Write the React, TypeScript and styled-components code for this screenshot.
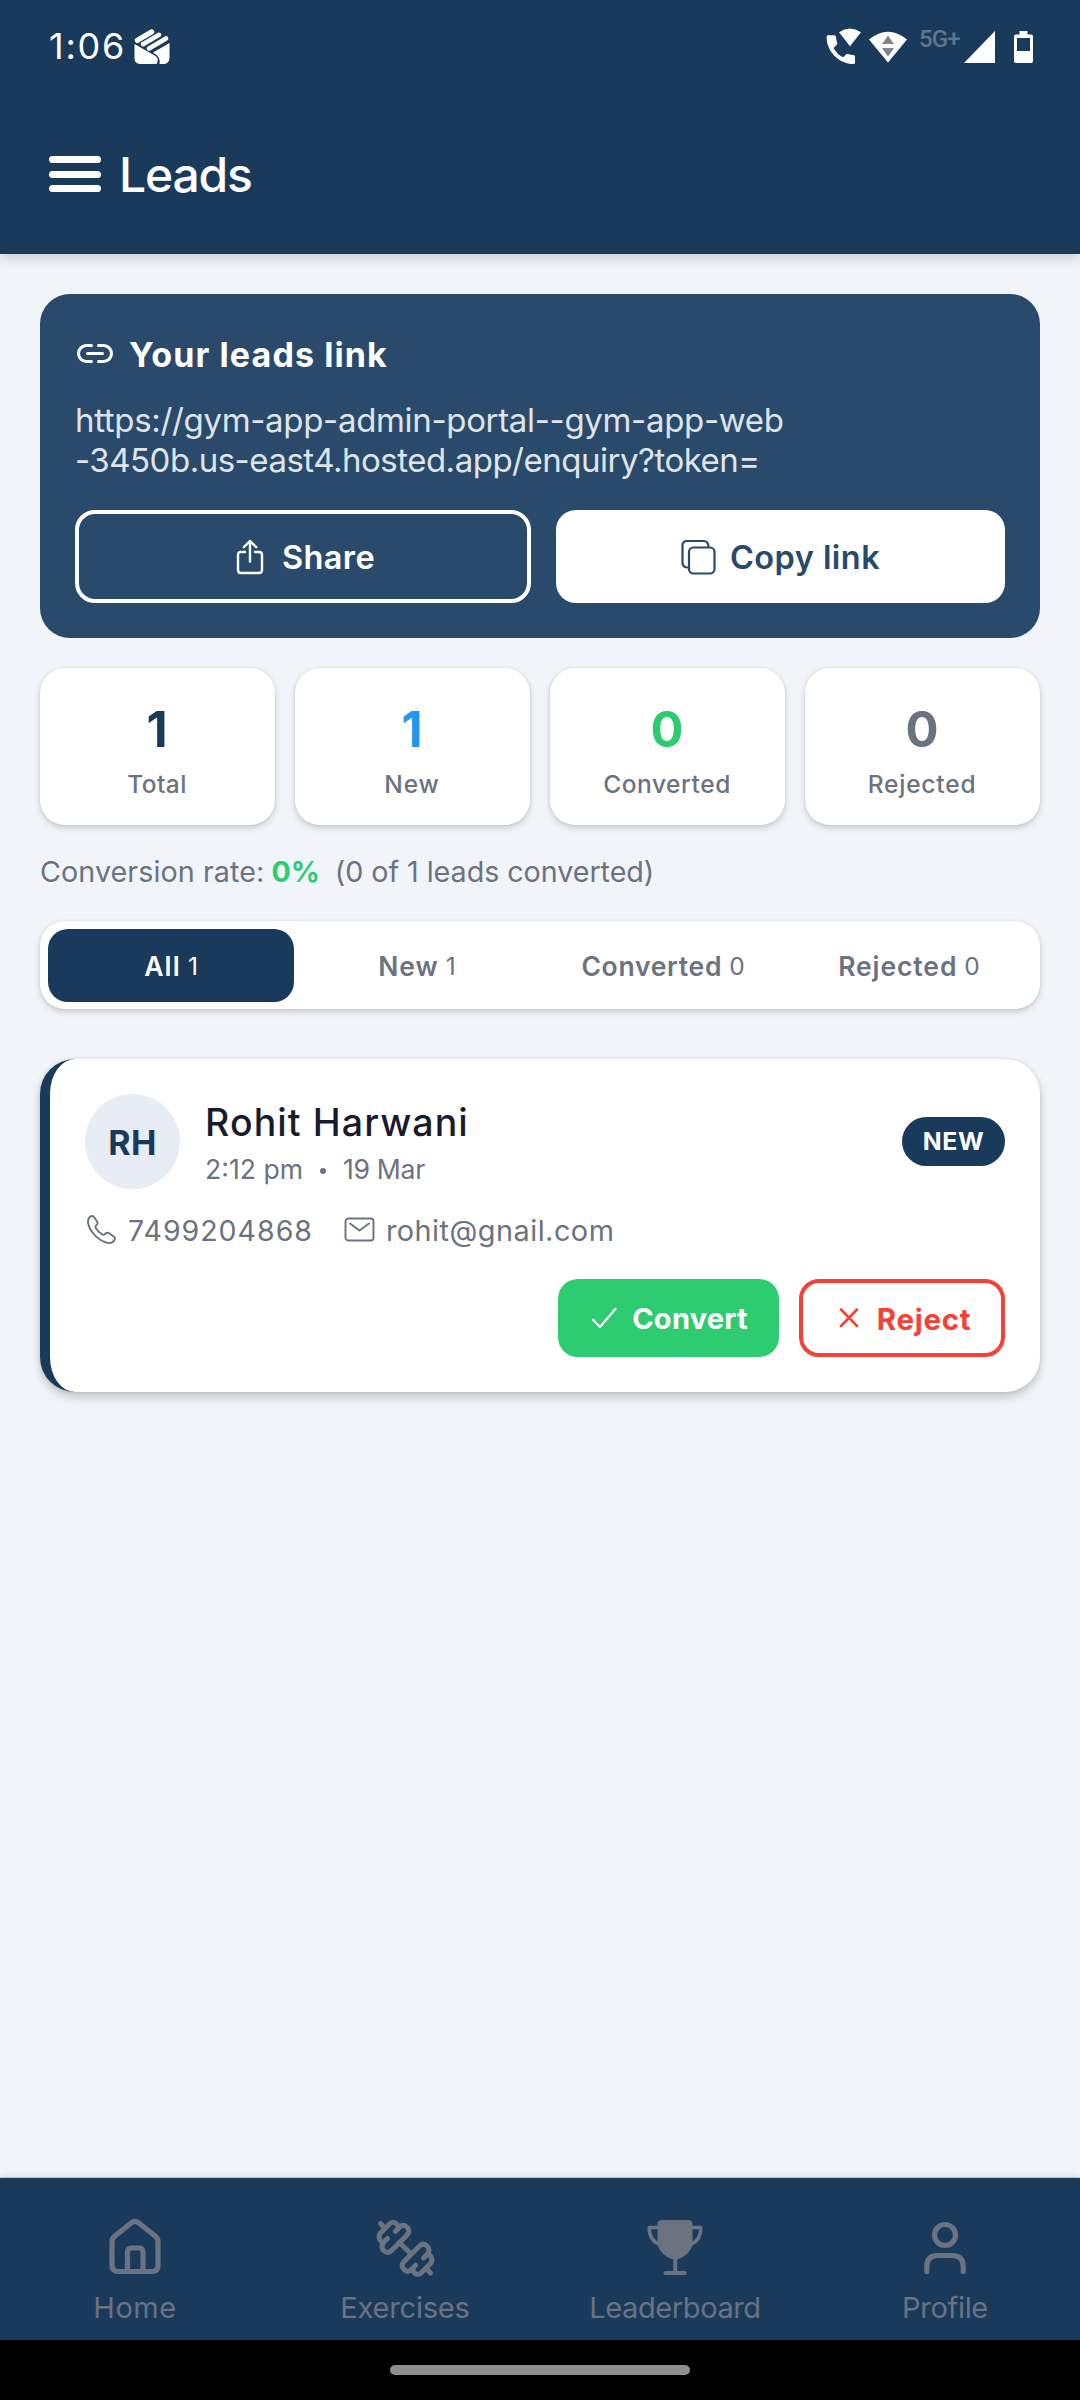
import React from "react";
import styled, { createGlobalStyle } from "styled-components";

const navy = "#1a3a5c";
const slate = "#6b7280";
const green = "#2ecc71";
const red = "#f44336";
const blue = "#2196f3";
const canvas = "#f1f5fa";

const GlobalStyle = createGlobalStyle`
  * { box-sizing: border-box; }
  body { margin: 0; background: ${canvas}; }
  button { font: inherit; margin: 0; padding: 0; border: 0; background: none; }
`;

const Screen = styled.div`
  width: 1080px;
  height: 2400px;
  display: flex;
  flex-direction: column;
  background: ${canvas};
  font-family: Inter, "Liberation Sans", sans-serif;
  color: ${slate};
  overflow: hidden;
`;

const Text = styled.span<{ $size: number; $weight?: number; $ls?: number; $color?: string; $line?: number }>`
  display: block;
  white-space: pre;
  font-size: ${(p) => p.$size}px;
  font-weight: ${(p) => p.$weight ?? 400};
  letter-spacing: ${(p) => p.$ls ?? 0}px;
  line-height: ${(p) => (p.$line ? `${p.$line}px` : "1.2")};
  color: ${(p) => p.$color ?? "inherit"};
`;

const Header = styled.header`
  height: 254px;
  flex: none;
  background: ${navy};
  color: #fff;
  box-shadow: 0 3px 12px rgba(0, 0, 0, 0.2);
`;

const StatusBar = styled.div`
  height: 93px;
  padding: 0 47px 0 49px;
  display: flex;
  align-items: center;
  justify-content: space-between;
`;

const StatusGroup = styled.div`
  display: flex;
  align-items: center;
`;

const NotificationIcon = styled.svg`
  margin-left: 7px;
`;

const NetworkLabel = styled.div`
  width: 54px;
  height: 33px;
  padding-left: 9px;
  font-family: Roboto, sans-serif;
  font-size: 24px;
  font-weight: 500;
  line-height: 19px;
  letter-spacing: -0.9px;
  color: #5e7690;
`;

const AppBar = styled.div`
  height: 161px;
  padding: 1px 0 0 49px;
  display: flex;
  align-items: center;
  gap: 18px;
  span { margin-top: 2px; }
`;

const MenuIcon = styled.div`
  width: 52px;
  height: 36px;
  display: flex;
  flex-direction: column;
  justify-content: space-between;
`;

const MenuBar = styled.i`
  height: 7px;
  border-radius: 4px;
  background: #fff;
`;

const Main = styled.main`
  flex: 1;
  padding: 40px 40px 0;
  display: flex;
  flex-direction: column;
`;

const LinkCard = styled.section`
  height: 344px;
  flex: none;
  padding: 41px 35px 35px;
  border-radius: 30px;
  background: #2a4a6b;
  color: #fff;
`;

const LinkTitle = styled.div`
  height: 40px;
  display: flex;
  align-items: center;
  gap: 12px;
  svg { margin-top: -2px; }
`;

const LinkUrl = styled.div`
  margin-top: 25px;
  color: #dfe4e9;
`;

const LinkActions = styled.div`
  margin-top: 30px;
  display: flex;
  gap: 25px;
`;

const LinkButton = styled.button<{ $filled?: boolean }>`
  width: ${(p) => (p.$filled ? 449 : 456)}px;
  height: 93px;
  padding-left: ${(p) => (p.$filled ? 0 : 5)}px;
  display: flex;
  align-items: center;
  justify-content: center;
  gap: ${(p) => (p.$filled ? 14 : 18)}px;
  border-radius: 20px;
  border: ${(p) => (p.$filled ? "0" : "4px solid #fff")};
  background: ${(p) => (p.$filled ? "#fff" : "transparent")};
  color: ${(p) => (p.$filled ? "#2a4a6b" : "#fff")};
  span { margin-top: 2px; }
`;

const Stats = styled.section`
  margin-top: 30px;
  display: grid;
  grid-template-columns: repeat(4, 1fr);
  gap: 20px;
`;

const raised = "0 3px 6px rgba(0, 0, 0, 0.17), 0 0 3px rgba(0, 0, 0, 0.08)";

const StatCard = styled.div`
  height: 157px;
  padding: 36px 1px 0 0;
  display: flex;
  flex-direction: column;
  align-items: center;
  gap: 14px;
  border-radius: 25px;
  background: #fff;
  box-shadow: ${raised};
`;

const RateRow = styled.p`
  height: 37px;
  margin: 28px 0 0;
  display: flex;
`;

const RateValue = styled.span`
  margin: 0 15px 0 7px;
`;

const Tabs = styled.nav`
  height: 88px;
  margin-top: 31px;
  padding: 8px;
  display: grid;
  grid-template-columns: repeat(4, 1fr);
  border-radius: 25px;
  background: #fff;
  box-shadow: ${raised};
`;

const Tab = styled.button<{ $active?: boolean }>`
  height: 73px;
  padding-top: 2px;
  display: flex;
  align-items: center;
  justify-content: center;
  gap: 7px;
  border-radius: 20px;
  background: ${(p) => (p.$active ? navy : "transparent")};
  color: ${(p) => (p.$active ? "#fff" : slate)};
`;

const LeadCard = styled.article`
  height: 333px;
  margin-top: 50px;
  padding: 35px;
  border-left: 10px solid ${navy};
  border-radius: 35px;
  background: #fff;
  box-shadow: 0 5px 10px rgba(0, 0, 0, 0.2), 0 0 4px rgba(0, 0, 0, 0.08);
`;

const LeadTop = styled.div`
  height: 95px;
  display: flex;
  align-items: center;
`;

const Avatar = styled.div`
  width: 95px;
  height: 95px;
  padding-top: 3px;
  display: flex;
  align-items: center;
  justify-content: center;
  border-radius: 50%;
  background: #e8ecf5;
`;

const LeadIdentity = styled.div`
  height: 95px;
  margin-left: 25px;
  padding-top: 6px;
  flex: 1;
  display: flex;
  flex-direction: column;
  gap: 7px;
`;

const LeadTime = styled.div`
  display: flex;
  align-items: center;
`;

const Dot = styled.i`
  width: 6px;
  height: 6px;
  margin: 4px 17px 0 17px;
  border-radius: 50%;
  background: ${slate};
`;

const Badge = styled.div`
  width: 103px;
  height: 49px;
  padding-top: 1px;
  display: flex;
  align-items: center;
  justify-content: center;
  border-radius: 25px;
  background: ${navy};
`;

const ContactRow = styled.div`
  height: 40px;
  margin-top: 22px;
  display: flex;
  align-items: center;
`;

const Contact = styled.div<{ $before: number }>`
  margin-left: ${(p) => p.$before}px;
  display: flex;
  align-items: center;
  gap: 11px;
  svg { margin-top: -4px; }
`;

const LeadActions = styled.div`
  margin-top: 28px;
  display: flex;
  justify-content: flex-end;
  gap: 20px;
`;

const ActionButton = styled.button<{ $outlined?: boolean }>`
  width: ${(p) => (p.$outlined ? 206 : 221)}px;
  height: 78px;
  padding: 1px 0 0 ${(p) => (p.$outlined ? 6 : 2)}px;
  display: flex;
  align-items: center;
  justify-content: center;
  gap: ${(p) => (p.$outlined ? 18 : 13)}px;
  border-radius: 20px;
  border: ${(p) => (p.$outlined ? `4px solid ${red}` : "0")};
  background: ${(p) => (p.$outlined ? "#fff" : green)};
  color: ${(p) => (p.$outlined ? red : "#fff")};
  span { margin-top: 2px; }
`;

const BottomNav = styled.nav`
  height: 162px;
  flex: none;
  display: grid;
  grid-template-columns: repeat(4, 1fr);
  background: ${navy};
  box-shadow: 0 0 8px rgba(0, 0, 0, 0.16), 0 -1px 0 rgba(0, 0, 0, 0.14);
`;

const NavItem = styled.a`
  padding-top: 33px;
  display: flex;
  flex-direction: column;
  align-items: center;
  gap: 9px;
`;

const GestureArea = styled.div`
  height: 60px;
  flex: none;
  display: flex;
  align-items: center;
  justify-content: center;
  background: #000;
`;

const GestureBar = styled.div`
  width: 300px;
  height: 10px;
  border-radius: 5px;
  background: #8f8f8f;
`;

const strokeProps = {
  fill: "none",
  stroke: "currentColor",
  strokeLinecap: "round" as const,
  strokeLinejoin: "round" as const,
};

const FistIcon = () => (
  <NotificationIcon width="38" height="38" viewBox="0 0 38 38">
    <g fill="none" stroke="#fff" strokeLinecap="round">
      <path strokeWidth="5.4" d="M4.500 12.300L18.500 4" />
      <path strokeWidth="4.600" d="M10 16.200L26 6.800" />
      <path strokeWidth="4.600" d="M16 20.400L33 10.400" />
    </g>
    <path fill="#fff" d="M1.500 16L22.500 28Q26.500 31 23.500 36H8Q1.500 36 1.500 30ZM20 24.500L36.500 15V30Q36 36 30 36H26.500Q28 29 20 24.500Z" />
  </NotificationIcon>
);

const WifiCallIcon = () => (
  <svg width="36" height="37" viewBox="0 0 36 37">
    <path fill="#fff" d="M2 7.200H8.500Q10 7.200 10 8.800Q10 12 11.200 15.200Q11.400 16.200 10.600 17L7.500 20Q11.500 27 17.200 29.300L20.300 26.300Q21 25.600 22 25.900Q25 26.800 27.500 26.900Q29 27 29 28.500V34.500Q29 36 27.500 36C13 36 .6 23.500 .6 8.700Q.6 7.200 2 7.200Z" />
    <path fill="#fff" d="M13 4.200Q23.800-3 35 4.200L24 18.300Z" />
  </svg>
);

const WifiIcon = () => (
  <svg width="48" height="34" viewBox="0 0 48 34">
    <path fill="#fff" d="M7 9.500Q26-6 45 9.500L26 32.500Z" />
    <path fill="#80868a" d="M20 14L26 5.500L32 14ZM20 18H32L26 26.500Z" />
  </svg>
);

const SignalIcon = () => (
  <svg width="32" height="32" viewBox="0 0 32 32">
    <path fill="#fff" d="M31 0V32H0Z" />
  </svg>
);

const BatteryIcon = () => (
  <svg width="37" height="32" viewBox="1 0 37 32">
    <path fill="#fff" fillRule="evenodd" d="M24.500 0H32.500V3.500H36Q38 3.500 38 5.500V30Q38 32 36 32H21Q19 32 19 30V5.500Q19 3.500 21 3.500H24.500ZM22 7V20H35V7Z" />
  </svg>
);

const LinkIcon = () => (
  <svg width="42" height="36" viewBox="0 0 42 36" {...strokeProps} strokeWidth="3">
    <path d="M16.500 9.500H11.500A8 8 0 0 0 11.500 25.500H16.500M23.500 9.500H28.500A8 8 0 0 1 28.500 25.500H23.500M12.500 17.500H27.500" />
  </svg>
);

const ShareIcon = () => (
  <svg width="28" height="36" viewBox="0 0 28 36" {...strokeProps} strokeWidth="2.4">
    <path d="M9 13H5Q2 13 2 16V31Q2 34 5 34H23Q26 34 26 31V16Q26 13 23 13H19M14 22.500V2M7.800 8.200L14 2L20.200 8.200" />
  </svg>
);

const CopyIcon = () => (
  <svg width="35" height="36" viewBox="0 0 35 36" {...strokeProps} strokeWidth="2.2">
    <rect x="8" y="8.500" width="25.500" height="26" rx="4.500" />
    <path d="M8 28.500H6Q1.500 28 1.500 23.500V6.500Q1.500 2 6 2H22.500Q27.500 2 27.500 8" />
  </svg>
);

const PhoneIcon = () => (
  <svg width="31" height="31" viewBox="0 0 31 31" {...strokeProps} strokeWidth="1.9">
    <path d="M3.200 3.600Q5 1.400 7.200 2.200Q9.300 4.300 11.400 8.100Q12 9.800 10.400 11.200Q9 12.200 9.600 13.800Q12.200 18.300 16.500 20.700Q18 21.300 19.200 19.800Q20.800 18 23 19.200L28 22.800Q29.800 24.300 28.300 26.300Q26 29.600 22.300 29.100C13.200 27.300 3.800 18 2.200 9.500Q1.500 6 3.200 3.600Z" />
  </svg>
);

const MailIcon = () => (
  <svg width="31" height="25" viewBox="0 0 31 25" {...strokeProps} strokeWidth="1.9">
    <rect x="1.500" y="1.500" width="28" height="22" rx="2.800" />
    <path d="M6 6.500L15.500 13.500L25 6.500" />
  </svg>
);

const CheckIcon = () => (
  <svg width="28" height="24" viewBox="0 0 28 24" {...strokeProps} strokeWidth="2.2">
    <path d="M2 12.800L9 20L24.500 1.800" />
  </svg>
);

const CrossIcon = () => (
  <svg width="20" height="24" viewBox="0 0 20 24" {...strokeProps} strokeWidth="2.6">
    <path d="M2 2.500L18 19M18 2.500L2 19" />
  </svg>
);

const HomeIcon = () => (
  <svg width="70" height="70" viewBox="0 0 70 70" {...strokeProps} strokeWidth="5.2">
    <path d="M12 30.500Q12 27.500 14.300 25.500L31.500 11.700Q35 9 38.500 11.700L55.700 25.500Q58 27.500 58 30.500V54.500Q58 60.500 52 60.500H18Q12 60.500 12 54.500ZM27.500 60.500V41Q27.500 37 31.500 37H39Q43 37 43 41V60.500" />
  </svg>
);

const DumbbellIcon = () => (
  <svg width="70" height="70" viewBox="0 0 70 70" {...strokeProps} strokeWidth="5">
    <path d="M30 32L41 43" />
    <g id="plates">
      <path d="M10.500 12.500L13.500 15.500M28.500 17C27.500 12 24 9.800 20 12.500L11 21.500C7.500 25 9 29.500 13.500 31.500" />
      <path d="M25.300 20.500L29.500 16Q33.500 12.500 37.200 16.200Q40.500 20 37 24L21 40Q17.500 43 13.700 39.500Q10.500 36 13.500 31.500L17.500 27.500" />
    </g>
    <use href="#plates" transform="rotate(180 35.500 37.300)" />
  </svg>
);

const TrophyIcon = () => (
  <svg width="70" height="70" viewBox="0 0 70 70">
    <path fill="currentColor" d="M17.500 13Q17.500 9 21.500 9H48.500Q52.500 9 52.500 13V34Q49 45 37.200 48.500V60H44.500Q46.800 60 46.800 62T44.500 64H25.500Q23.500 64 23.500 62T25.500 60H33.300V48.500Q21 45 17.500 34Z" />
    <path {...strokeProps} strokeWidth="3.600" d="M19 16.500H9.300Q9 29 19 33M51.500 16.500H60.700Q61 29 51.500 33" />
  </svg>
);

const ProfileIcon = () => (
  <svg width="70" height="70" viewBox="0 0 70 70" {...strokeProps} strokeWidth="5.2">
    <circle cx="35" cy="24" r="10.500" />
    <path d="M16.800 60.500V55Q17 44.500 28 44.500H42Q53 44.500 53.200 55V60.500" />
  </svg>
);

const stats = [
  { label: "Total", value: "1", color: navy, ls: 0.44 },
  { label: "New", value: "1", color: blue, ls: 0.9 },
  { label: "Converted", value: "0", color: green, ls: 0.56 },
  { label: "Rejected", value: "0", color: slate, ls: 0.8 },
];

const tabs = [
  { label: "All", count: "1", ls: 1.2 },
  { label: "New", count: "1", ls: 0.9 },
  { label: "Converted", count: "0", ls: 0.7 },
  { label: "Rejected", count: "0", ls: 0.9 },
];

const navItems = [
  { label: "Home", icon: <HomeIcon />, ls: 0.5 },
  { label: "Exercises", icon: <DumbbellIcon />, ls: -0.2 },
  { label: "Leaderboard", icon: <TrophyIcon />, ls: -0.4 },
  { label: "Profile", icon: <ProfileIcon />, ls: -0.3 },
];

export default function App() {
  return (
    <Screen>
      <GlobalStyle />
      <Header>
        <StatusBar>
          <StatusGroup>
            <Text $size={36} $ls={1.8}>1:06</Text>
            <FistIcon />
          </StatusGroup>
          <StatusGroup>
            <WifiCallIcon />
            <WifiIcon />
            <NetworkLabel>5G+</NetworkLabel>
            <SignalIcon />
            <BatteryIcon />
          </StatusGroup>
        </StatusBar>
        <AppBar>
          <MenuIcon>
            <MenuBar />
            <MenuBar />
            <MenuBar />
          </MenuIcon>
          <Text $size={48} $weight={500} $ls={-1.2}>Leads</Text>
        </AppBar>
      </Header>

      <Main>
        <LinkCard>
          <LinkTitle>
            <LinkIcon />
            <Text $size={34} $weight={700} $ls={1.1} $line={40}>Your leads link</Text>
          </LinkTitle>
          <LinkUrl>
            <Text $size={33} $ls={-0.33} $line={40}>https://gym-app-admin-portal--gym-app-web</Text>
            <Text $size={33} $ls={-0.49} $line={40}>-3450b.us-east4.hosted.app/enquiry?token=</Text>
          </LinkUrl>
          <LinkActions>
            <LinkButton>
              <ShareIcon />
              <Text $size={32.5} $weight={600} $ls={0.4}>Share</Text>
            </LinkButton>
            <LinkButton $filled>
              <CopyIcon />
              <Text $size={32.5} $weight={600} $ls={0.45}>Copy link</Text>
            </LinkButton>
          </LinkActions>
        </LinkCard>

        <Stats>
          {stats.map((s) => (
            <StatCard key={s.label}>
              <Text $size={49} $weight={700} $line={51} $color={s.color}>{s.value}</Text>
              <Text $size={24.5} $weight={500} $line={30} $ls={s.ls}>{s.label}</Text>
            </StatCard>
          ))}
        </Stats>

        <RateRow>
          <Text $size={28.7} $line={37} $ls={0.08}>Conversion rate:</Text>
          <RateValue>
            <Text $size={28.7} $weight={700} $line={37} $color={green}>0%</Text>
          </RateValue>
          <Text $size={28.7} $line={37} $ls={-0.05}>(0 of 1 leads converted)</Text>
        </RateRow>

        <Tabs>
          {tabs.map((t, i) => (
            <Tab key={t.label} $active={i === 0}>
              <Text $size={26.5} $weight={600} $ls={t.ls}>{t.label}</Text>
              <Text $size={24.5}>{t.count}</Text>
            </Tab>
          ))}
        </Tabs>

        <LeadCard>
          <LeadTop>
            <Avatar>
              <Text $size={34} $weight={700} $ls={0.5} $color={navy}>RH</Text>
            </Avatar>
            <LeadIdentity>
              <Text $size={37.5} $weight={500} $ls={1.1} $line={45} $color="#1a1a2e">Rohit Harwani</Text>
              <LeadTime>
                <Text $size={26.6} $line={34}>2:12 pm</Text>
                <Dot />
                <Text $size={26.6} $line={34} $ls={-0.3}>19 Mar</Text>
              </LeadTime>
            </LeadIdentity>
            <Badge>
              <Text $size={24.8} $weight={700} $ls={0.6} $color="#fff">NEW</Text>
            </Badge>
          </LeadTop>
          <ContactRow>
            <Contact $before={1}>
              <PhoneIcon />
              <Text $size={28.5} $line={40} $ls={1}>7499204868</Text>
            </Contact>
            <Contact $before={31}>
              <MailIcon />
              <Text $size={28.8} $line={40} $ls={0.5}>rohit@gnail.com</Text>
            </Contact>
          </ContactRow>
          <LeadActions>
            <ActionButton>
              <CheckIcon />
              <Text $size={29} $weight={700} $ls={0.25}>Convert</Text>
            </ActionButton>
            <ActionButton $outlined>
              <CrossIcon />
              <Text $size={29.5} $weight={700} $ls={0.7}>Reject</Text>
            </ActionButton>
          </LeadActions>
        </LeadCard>
      </Main>

      <BottomNav>
        {navItems.map((n) => (
          <NavItem key={n.label}>
            {n.icon}
            <Text $size={29} $line={36} $ls={n.ls}>{n.label}</Text>
          </NavItem>
        ))}
      </BottomNav>
      <GestureArea>
        <GestureBar />
      </GestureArea>
    </Screen>
  );
}
